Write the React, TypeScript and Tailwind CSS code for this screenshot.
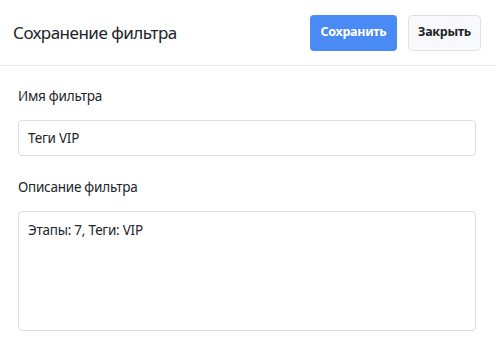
import React from "react";

export default function App() {
  return (
    <div className="w-[495px] h-[354px] bg-white text-[#212529] font-['Noto_Sans',sans-serif]">
      {/* Header */}
      <div className="h-[66px] flex items-center justify-between pl-[13px] pr-[14px] border-b border-[#e9ecef]">
        <h1 className="text-[17px] tracking-[-0.5px] font-normal leading-none">Сохранение фильтра</h1>
        <div className="flex items-center gap-[11px]">
          <button className="h-[36px] w-[87px] rounded-[4px] bg-[#4a8af4] text-white text-[12.5px] tracking-[-0.3px] font-bold">
            Сохранить
          </button>
          <button className="h-[36px] w-[73px] rounded-[4px] bg-[#f8f9fa] border border-[#dee2e6] text-[#212529] text-[12.5px] tracking-[-0.3px] font-bold">
            Закрыть
          </button>
        </div>
      </div>

      {/* Body */}
      <div className="px-[18px] pt-[20px] flex flex-col text-[13.5px] tracking-[-0.25px]">
        <label className="leading-[20px]">Имя фильтра</label>
        <div className="mt-[14px] h-[36px] w-[458px] border border-[#dedede] rounded-[4px] flex items-center px-[9px]">
          Теги VIP
        </div>
        <label className="mt-[21px] leading-[20px]">Описание фильтра</label>
        <div className="mt-[14px] h-[120px] w-[458px] border border-[#dedede] rounded-[4px] px-[9px] pt-[8px] leading-[20px]">
          Этапы: 7, Теги: VIP
        </div>
      </div>
    </div>
  );
}
